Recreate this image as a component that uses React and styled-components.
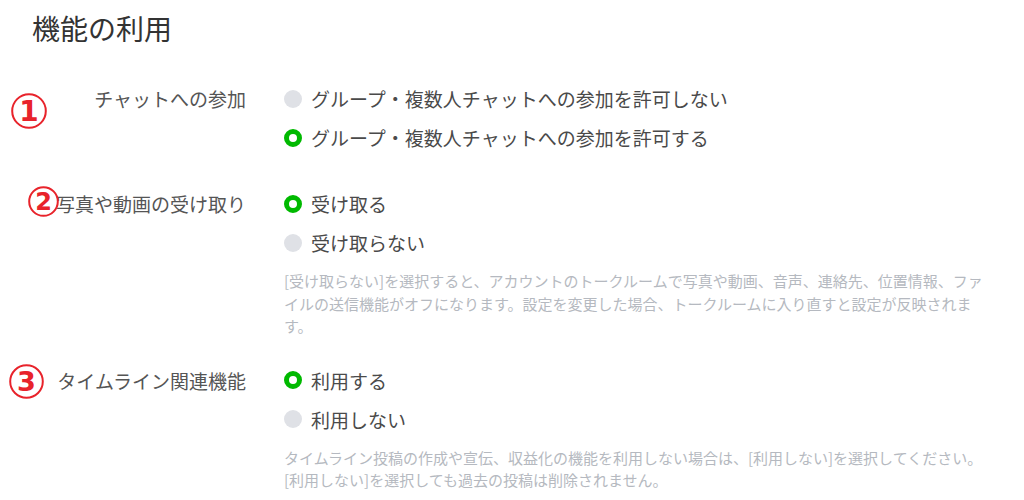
import React from "react";
import styled, { createGlobalStyle } from "styled-components";

const Global = createGlobalStyle`
  html, body { margin: 0; padding: 0; background: #fff; }
  body { font-family: "Noto Sans CJK JP", "Noto Sans", sans-serif; }
`;

const Page = styled.div`
  width: 1024px;
  height: 500px;
  overflow: hidden;
  padding-top: 8px;
  box-sizing: border-box;
`;

const Title = styled.h1`
  margin: 0 0 31px 32px;
  font-size: 28px;
  line-height: 40px;
  font-weight: 400;
  color: #333;
`;

const Sections = styled.div`
  display: flex;
  flex-direction: column;
  gap: 27px;
`;

const Section = styled.section`
  position: relative;
  display: grid;
  grid-template-columns: 246px 710px;
  column-gap: 38px;
`;

const Label = styled.div`
  text-align: right;
  font-size: 19px;
  line-height: 39px;
  color: #555;
  white-space: nowrap;
`;

const Options = styled.div`
  display: flex;
  flex-direction: column;
`;

const Option = styled.label`
  display: flex;
  align-items: center;
  gap: 9px;
  height: 39px;
  font-size: 19px;
  color: #4a4a4a;
  white-space: nowrap;
`;

const Radio = styled.span`
  box-sizing: border-box;
  width: 18px;
  height: 18px;
  border-radius: 50%;
  flex: none;
  background: ${(p) => (p.$checked ? "#fff" : "#dfe1e6")};
  border: ${(p) => (p.$checked ? "5px solid #00b900" : "none")};
`;

const Help = styled.p`
  margin: 8px 0 -4px;
  font-size: 15px;
  line-height: 22.5px;
  color: #b5b9c0;
`;

const Marker = styled.svg`
  position: absolute;
  overflow: visible;
`;

function CircleNum({ n, x, y, r }) {
  return (
    <Marker
      width={r * 2}
      height={r * 2}
      style={{ left: x - r, top: y - r }}
      viewBox={`0 0 ${r * 2} ${r * 2}`}
    >
      <circle cx={r} cy={r} r={r - 1.2} fill="none" stroke="#e8232b" strokeWidth="2" />
      <text
        x={r}
        y={r + r * 0.55}
        textAnchor="middle"
        fontFamily="'DejaVu Sans', sans-serif"
        fontWeight="bold"
        fontSize={r * 1.55}
        fill="#e8232b"
      >
        {n}
      </text>
    </Marker>
  );
}

const data = [
  {
    label: "チャットへの参加",
    options: [
      ["グループ・複数人チャットへの参加を許可しない", false],
      ["グループ・複数人チャットへの参加を許可する", true],
    ],
    marker: { n: 1, x: 29, y: 31.5, r: 18 },
  },
  {
    label: "写真や動画の受け取り",
    options: [
      ["受け取る", true],
      ["受け取らない", false],
    ],
    help:
      "[受け取らない]を選択すると、アカウントのトークルームで写真や動画、音声、連絡先、位置情報、ファイルの送信機能がオフになります。設定を変更した場合、トークルームに入り直すと設定が反映されます。",
    marker: { n: 2, x: 43, y: 17.5, r: 15.5 },
  },
  {
    label: "タイムライン関連機能",
    options: [
      ["利用する", true],
      ["利用しない", false],
    ],
    help:
      "タイムライン投稿の作成や宣伝、収益化の機能を利用しない場合は、[利用しない]を選択してください。[利用しない]を選択しても過去の投稿は削除されません。",
    marker: { n: 3, x: 26, y: 20.5, r: 17.5 },
  },
];

export default function App() {
  return (
    <Page>
      <Global />
      <Title>機能の利用</Title>
      <Sections>
        {data.map((s) => (
          <Section key={s.label}>
            <Label>{s.label}</Label>
            <Options>
              {s.options.map(([t, c]) => (
                <Option key={t}>
                  <Radio $checked={c} />
                  {t}
                </Option>
              ))}
              {s.help && <Help>{s.help}</Help>}
            </Options>
            <CircleNum {...s.marker} />
          </Section>
        ))}
      </Sections>
    </Page>
  );
}
